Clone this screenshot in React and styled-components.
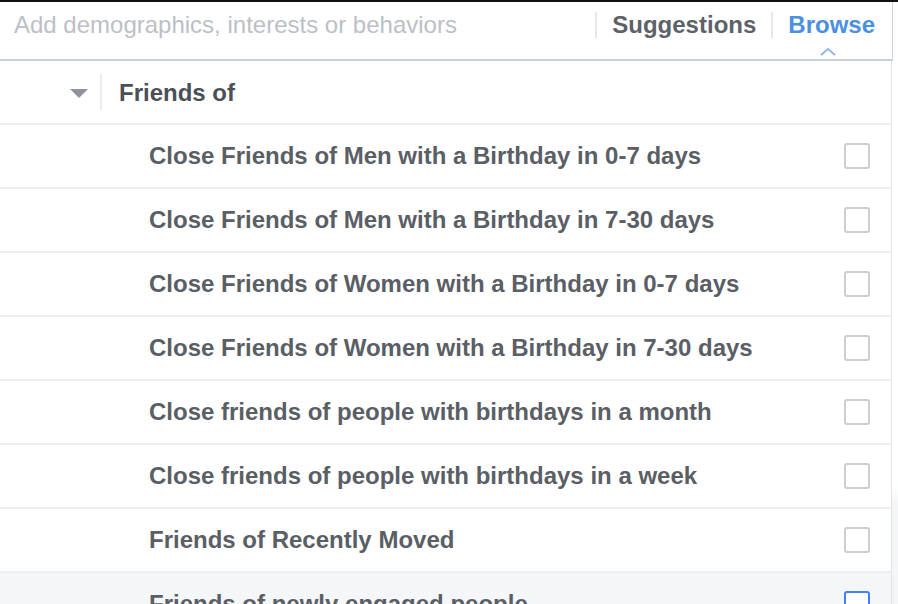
import React from "react";
import styled, { createGlobalStyle } from "styled-components";

const Global = createGlobalStyle`
  html, body {
    margin: 0;
    padding: 0;
    background: #fff;
  }
  body {
    font-family: "Liberation Sans", Arial, sans-serif;
  }
`;

const items = [
  "Close Friends of Men with a Birthday in 0-7 days",
  "Close Friends of Men with a Birthday in 7-30 days",
  "Close Friends of Women with a Birthday in 0-7 days",
  "Close Friends of Women with a Birthday in 7-30 days",
  "Close friends of people with birthdays in a month",
  "Close friends of people with birthdays in a week",
  "Friends of Recently Moved",
  "Friends of newly engaged people",
];

function App() {
  return (
    <>
      <Global />
      <Page>
        <Header>
          <Search>Add demographics, interests or behaviors</Search>
          <Tab>Suggestions</Tab>
          <Tab active>
            Browse
            <Caret width="16" height="9" viewBox="0 0 16 9">
              <path d="M1 8 L8 2 L15 8" fill="none" stroke="#8fb6ef" strokeWidth="2" />
            </Caret>
          </Tab>
        </Header>
        <Body>
          <List>
            <GroupRow>
              <Toggle>
                <svg width="18" height="10" viewBox="0 0 18 10">
                  <path d="M0 0 L18 0 L9 9 Z" fill="#90949c" />
                </svg>
              </Toggle>
              <GroupTitle>Friends of</GroupTitle>
            </GroupRow>
            {items.map((item, i) => (
              <Row key={item} hover={i === items.length - 1}>
                <Label>{item}</Label>
                <Check hover={i === items.length - 1} />
              </Row>
            ))}
          </List>
          <Gutter />
        </Body>
      </Page>
    </>
  );
}

export default App;

const Page = styled.div`
  width: 898px;
  height: 604px;
  overflow: hidden;
  border-top: 2px solid #111;
  box-sizing: border-box;
  display: flex;
  flex-direction: column;
`;

const Header = styled.div`
  width: 893px;
  height: 59px;
  flex-shrink: 0;
  box-sizing: border-box;
  display: flex;
  align-items: center;
  border-right: 1px solid #cdd3dc;
  border-bottom: 2px solid #cad1db;
  padding: 0 17px 11px 14px;
`;

const Search = styled.div`
  flex: 1;
  font-size: 24px;
  color: #bcc0c6;
`;

const Tab = styled.div`
  position: relative;
  font-size: 24px;
  font-weight: bold;
  color: ${(p) => (p.active ? "#4a90e2" : "#5d6168")};
  padding-left: 15px;
  margin-left: ${(p) => (p.active ? "15px" : "0")};
  border-left: 2px solid #e5e7ea;
  line-height: 26px;
`;

const Caret = styled.svg`
  position: absolute;
  left: 47px;
  top: 35px;
`;

const Body = styled.div`
  flex: 1;
  display: flex;
  overflow: hidden;
`;

const List = styled.div`
  width: 891px;
  flex-shrink: 0;
  border-right: 1px solid #e2e4e7;
`;

const Gutter = styled.div`
  flex: 1;
  background: linear-gradient(to bottom, #fff 0%, #fff 78%, #f4f5f7 82%);
`;

const GroupRow = styled.div`
  height: 64px;
  box-sizing: border-box;
  display: flex;
  align-items: center;
  border-bottom: 2px solid #eceef1;
  padding-left: 70px;
`;

const Toggle = styled.div`
  width: 30px;
  height: 36px;
  display: flex;
  align-items: center;
  border-right: 2px solid #eceef1;
  margin-right: 17px;
  svg {
    margin-top: 4px;
  }
`;

const GroupTitle = styled.div`
  font-size: 24px;
  font-weight: bold;
  color: #4b4f56;
  margin-top: 2px;
`;

const Row = styled.div`
  height: 64px;
  flex-shrink: 0;
  box-sizing: border-box;
  display: flex;
  align-items: center;
  padding: 0 21px 0 149px;
  border-bottom: 2px solid #eceef1;
  background: ${(p) => (p.hover ? "#f5f6f8" : "#fff")};
`;

const Label = styled.div`
  flex: 1;
  font-size: 24px;
  font-weight: bold;
  color: #5a5e65;
`;

const Check = styled.div`
  width: 22px;
  height: 22px;
  border: 2px solid ${(p) => (p.hover ? "#4080ff" : "#ccd0d5")};
  border-radius: 3px;
  background: #fff;
`;
